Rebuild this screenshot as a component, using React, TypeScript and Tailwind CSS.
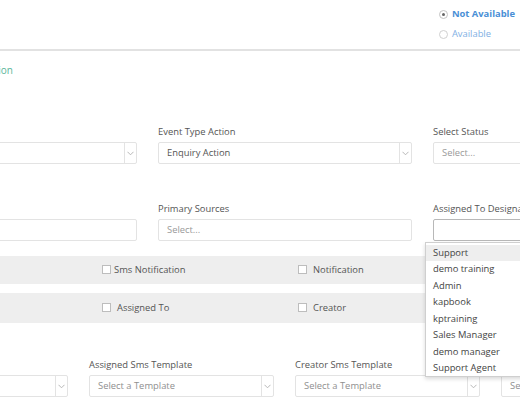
import React from "react";

const Chevron = () => (
  <svg width="7" height="5" viewBox="0 0 7 5" className="block">
    <polyline points="0.5,0.8 3.5,3.8 6.5,0.8" fill="none" stroke="#b0b0b0" strokeWidth="0.9" />
  </svg>
);

function SelectBox({ value, placeholder, w }: { value?: string; placeholder?: string; w: string }) {
  return (
    <div className={`${w} h-[22px] flex items-center border border-[#e3e3e3] bg-white rounded-[2px]`}>
      <div className={`flex-1 pl-[8px] whitespace-nowrap overflow-hidden ${value ? "text-[#555555]" : "text-[#8f8f8f]"}`}>{value ?? placeholder}</div>
      <div className="h-full w-[12px] border-l border-[#e3e3e3] flex items-center justify-center">
        <Chevron />
      </div>
    </div>
  );
}

function PlainBox({ placeholder, w, focused }: { placeholder?: string; w: string; focused?: boolean }) {
  return (
    <div className={`${w} h-[22px] flex items-center border ${focused ? "border-[#b8b8b8]" : "border-[#e3e3e3]"} bg-white rounded-[2px]`}>
      <div className="pl-[8px] text-[#9a9a9a]">{placeholder}</div>
    </div>
  );
}

function Field({ label, children, w }: { label: string; children: React.ReactNode; w: string }) {
  return (
    <div className={`${w} shrink-0 flex flex-col`}>
      <div className="h-[12px] leading-[12px] mb-[4px] text-[#555555] whitespace-nowrap">{label}</div>
      {children}
    </div>
  );
}

function Check({ label, gap }: { label: string; gap: string }) {
  return (
    <div className={`flex items-center ${gap}`}>
      <div className="w-[9px] h-[9px] border border-[#bdbdbd] bg-white" />
      <span className="text-[#555555] whitespace-nowrap">{label}</span>
    </div>
  );
}

export default function App() {
  const items = ["Support", "demo training", "Admin", "kapbook", "kptraining", "Sales Manager", "demo manager", "Support Agent"];
  return (
    <div
      className="relative w-[520px] h-[410px] overflow-hidden bg-white text-[9.4px]"
      style={{ fontFamily: '"Open Sans", "Noto Sans", sans-serif' }}
    >
      {/* header */}
      <div className="h-[51px] border-b-2 border-[#e2e2e2] flex justify-end pr-[5px]">
        <div className="flex flex-col pt-[4px]">
          <div className="h-[20px] flex items-center gap-[4px] whitespace-nowrap">
            <div className="w-[9px] h-[9px] rounded-full border border-[#c4c4c4] flex items-center justify-center">
              <div className="w-[3px] h-[3px] rounded-full bg-[#666]" />
            </div>
            <span className="font-bold text-[#4a8fd6]">Not Available</span>
          </div>
          <div className="h-[20px] flex items-center gap-[4px] whitespace-nowrap">
            <div className="w-[9px] h-[9px] rounded-full border border-[#d0d0d0]" />
            <span className="text-[#7fb0e4]">Available</span>
          </div>
        </div>
      </div>

      <div className="ml-[-117px] w-[803px]">
        <div className="mt-[13px] h-[12px] leading-[12px] w-[130px] text-right text-[#5bb59a] text-[10px] overflow-hidden whitespace-nowrap">
          Event Action
        </div>

        {/* row 1 */}
        <div className="mt-[50px] flex gap-[21px]">
          <Field label="Event Type" w="w-[254px]">
            <SelectBox value="Enquiry" w="w-full" />
          </Field>
          <Field label="Event Type Action" w="w-[254px]">
            <SelectBox value="Enquiry Action" w="w-full" />
          </Field>
          <Field label="Select Status" w="w-[254px]">
            <PlainBox placeholder="Select..." w="w-full" />
          </Field>
        </div>

        {/* row 2 */}
        <div className="mt-[39px] flex gap-[21px]">
          <Field label="Select Source" w="w-[254px]">
            <PlainBox placeholder="Select..." w="w-full" />
          </Field>
          <Field label="Primary Sources" w="w-[254px]">
            <PlainBox placeholder="Select..." w="w-full" />
          </Field>
          <Field label="Assigned To Designation" w="w-[254px]">
            <PlainBox w="w-full" focused />
          </Field>
        </div>

        {/* bands */}
        <div className="mt-[15px] h-[28px] bg-[#eeeeee] grid grid-cols-[repeat(4,196px)] pl-[23px] items-center">
          <Check label="Email Notification" gap="gap-[3px]" />
          <Check label="Sms Notification" gap="gap-[3px]" />
          <Check label="Notification" gap="gap-[6px]" />
          <Check label="Whatsapp" gap="gap-[6px]" />
        </div>
        <div className="mt-[9px] h-[30px] bg-[#eeeeee] grid grid-cols-[repeat(4,196px)] pl-[23px] items-center">
          <Check label="Customer" gap="gap-[6px]" />
          <Check label="Assigned To" gap="gap-[6px]" />
          <Check label="Creator" gap="gap-[6px]" />
          <Check label="Designation" gap="gap-[6px]" />
        </div>

        {/* row 3 */}
        <div className="mt-[36px] flex gap-[21px]">
          <Field label="Customer Sms Template" w="w-[185px]">
            <SelectBox placeholder="Select a Template" w="w-full" />
          </Field>
          <Field label="Assigned Sms Template" w="w-[185px]">
            <SelectBox placeholder="Select a Template" w="w-full" />
          </Field>
          <Field label="Creator Sms Template" w="w-[185px]">
            <SelectBox placeholder="Select a Template" w="w-full" />
          </Field>
          <Field label="Designation Sms Template" w="w-[185px]">
            <SelectBox placeholder="Select a Template" w="w-full" />
          </Field>
        </div>
      </div>

      {/* dropdown menu */}
      <div className="absolute left-[425px] top-[242px] w-[110px] h-[135px] bg-white border border-[#cfcfcf] shadow-[0_2px_4px_rgba(0,0,0,0.15)] pt-[2px]">
        {items.map((it, i) => (
          <div
            key={it}
            className={`h-[16.45px] leading-[16.45px] pl-[7px] text-[#444444] ${i === 0 ? "bg-[#eeeeee]" : ""}`}
          >
            {it}
          </div>
        ))}
      </div>
    </div>
  );
}
